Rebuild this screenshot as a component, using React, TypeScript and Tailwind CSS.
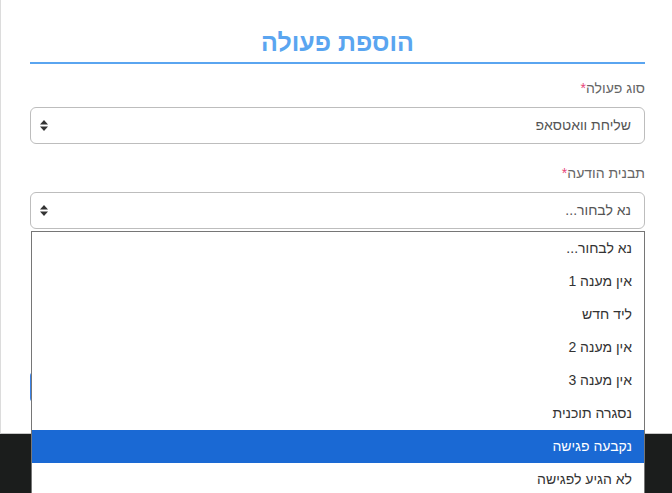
import React from "react";

const Arrows = () => (
  <svg width="8" height="11" viewBox="0 0 8 11" className="block">
    <path d="M0 4.5 L4 0 L8 4.5 Z" fill="#333" />
    <path d="M0 6.5 L4 11 L8 6.5 Z" fill="#333" />
  </svg>
);

const items = [
  "נא לבחור...",
  "אין מענה 1",
  "ליד חדש",
  "אין מענה 2",
  "אין מענה 3",
  "נסגרה תוכנית",
  "נקבעה פגישה",
  "לא הגיע לפגישה",
];

function Field({ label, value }: { label: string; value: string }) {
  return (
    <div className="flex flex-col">
      <div className="text-[14px] leading-[20px] text-[#666] mb-[9px]">
        {label}
        <span className="text-[#e8457a]">*</span>
      </div>
      <div className="h-[37px] border border-[#bdbdbd] rounded-[6px] flex items-center justify-between pr-[13px] pl-[9px] bg-white">
        <span className="text-[14px] text-[#555]">{value}</span>
        <Arrows />
      </div>
    </div>
  );
}

export default function App() {
  return (
    <div
      className="relative w-full h-[493px] overflow-hidden flex flex-col bg-[#1b1d1c]"
      style={{ fontFamily: '"Liberation Sans", Arial, sans-serif' }}
    >
      <div
        dir="rtl"
        className="h-[434px] bg-white border-l border-b border-l-[#dcdcdc] border-b-[#c8c8c8] pl-[29px] pr-[27px] pt-[26px] flex flex-col"
      >
        <h1 className="text-center text-[25px] leading-[32px] font-black text-[#5aa5f0] mb-[4px]">
          הוספת פעולה
        </h1>
        <div className="h-[2px] bg-[#5aa5f0]" />
        <div className="mt-[14px]">
          <Field label="סוג פעולה" value="שליחת וואטסאפ" />
        </div>
        <div className="mt-[19px]">
          <Field label="תבנית הודעה" value="נא לבחור..." />
        </div>
        <div className="mt-[143px] h-[30px] rounded-[4px] bg-[#3b82e6]" />
      </div>

      <div
        dir="rtl"
        className="absolute left-[31px] top-[231px] w-[614px] h-[280px] bg-white border border-[#767676]"
      >
        {items.map((it, i) => (
          <div
            key={i}
            className={
              "h-[33px] flex items-center pr-[12px] text-[14px] " +
              (i === 6 ? "bg-[#1a69d4] text-white" : "text-[#333]")
            }
          >
            {it}
          </div>
        ))}
      </div>
    </div>
  );
}
